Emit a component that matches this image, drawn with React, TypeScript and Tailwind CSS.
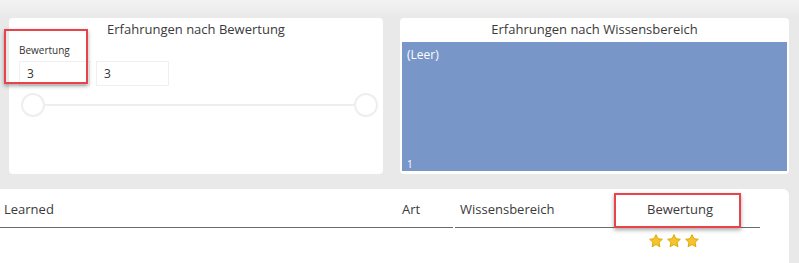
import React from "react";

function Star() {
  return (
    <svg width="16" height="16" viewBox="0 0 24 24">
      <path
        d="M12 2.5l2.9 6.1 6.6.8-4.9 4.6 1.3 6.6L12 17.3l-5.9 3.3 1.3-6.6-4.9-4.6 6.6-.8z"
        fill="#f4c430"
        stroke="#e0a800"
        strokeWidth="1.5"
        strokeLinejoin="round"
      />
    </svg>
  );
}

export default function App() {
  return (
    <main
      className="relative w-[799px] h-[263px] overflow-hidden bg-gradient-to-b from-[#f3f3f3] to-[#e9e9e9] to-[18px] text-[#333]"
      style={{ fontFamily: '"Open Sans", "Noto Sans", sans-serif' }}
    >
      <div className="flex gap-[17px] pl-[9px] pt-[18px]">
        {/* Slicer card */}
        <section className="w-[374px] h-[156px] bg-white rounded-[4px] flex flex-col">
          <h2 className="text-center text-[13px] leading-[20px] pt-[1px] text-[#3a3a3a]">
            Erfahrungen nach Bewertung
          </h2>
          <div className="pl-[10px] pt-[4px] text-[10px] leading-[14px] text-[#333]">Bewertung</div>
          <div className="flex gap-[6px] pl-[10px] pt-[4px]">
            <div className="w-[71px] h-[25px] border border-[#f0f0f0] text-[12px] leading-[23px] pl-[7px]">3</div>
            <div className="w-[73px] h-[25px] border border-[#f0f0f0] text-[12px] leading-[23px] pl-[7px]">3</div>
          </div>
          <div className="relative ml-[12px] mr-[5px] mt-[7px] h-[24px] flex items-center">
            <div className="w-full h-[2px] bg-[#eeeeee]" />
            <div className="absolute left-0 top-0 w-[24px] h-[24px] rounded-full bg-white border-2 border-[#eeeeee]" />
            <div className="absolute right-0 top-0 w-[24px] h-[24px] rounded-full bg-white border-2 border-[#eeeeee]" />
          </div>
        </section>

        {/* Treemap card */}
        <section className="w-[389px] h-[156px] bg-white rounded-[4px] flex flex-col px-[2px] pb-[3px]">
          <h2 className="text-center text-[13px] leading-[20px] pt-[1px] pb-[3px] text-[#3a3a3a]">
            Erfahrungen nach Wissensbereich
          </h2>
          <div className="flex-1 bg-[#7996c8] flex flex-col justify-between px-[5px] pt-[5px] pb-[1px] text-white">
            <span className="text-[12px] leading-[16px]">(Leer)</span>
            <span className="text-[10px] leading-[12px]">1</span>
          </div>
        </section>
      </div>

      {/* Table */}
      <section className="mt-[15px] w-[789px] h-[80px] bg-white rounded-tr-[6px] pt-[10px]">
        <div className="flex w-[760px] h-[29px] text-[13px] leading-[20px] text-[#3a3a3a]">
          <div className="w-[398px] pl-[4px] border-b border-[#6b6b6b]">Learned</div>
          <div className="w-[55px] pl-[4px] border-b border-[#6b6b6b]">Art</div>
          <div className="w-[2px]" />
          <div className="w-[145px] pl-[5px] border-b border-[#6b6b6b]">Wissensbereich</div>
          <div className="flex-1 text-center border-b border-[#6b6b6b]">Bewertung</div>
        </div>
        <div className="flex">
          <div className="w-[600px]" />
          <div className="w-[148px] flex justify-center gap-[2px] pt-[5px]">
            <Star />
            <Star />
            <Star />
          </div>
        </div>
      </section>

      {/* highlight boxes */}
      <div className="absolute left-[4px] top-[29px] w-[84px] h-[55px] border-2 border-[#e8434a] shadow-[0_2px_4px_rgba(0,0,0,0.35)]" />
      <div className="absolute left-[614px] top-[193px] w-[127px] h-[35px] border-2 border-[#e8434a] shadow-[0_2px_4px_rgba(0,0,0,0.35)]" />
    </main>
  );
}
